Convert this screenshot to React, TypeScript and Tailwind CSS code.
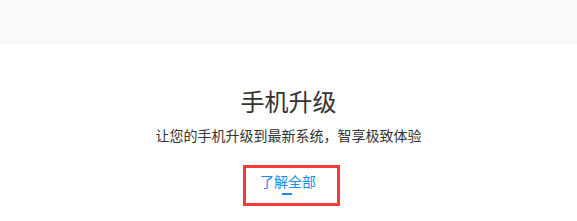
export default function App() {
  return (
    <div className="min-h-[221px] w-full bg-white font-['Noto_Sans_CJK_SC','Noto_Sans',sans-serif]">
      <div className="h-[44px] bg-[#fafafa]" />
      <section className="flex flex-col items-center pt-[41px] text-center">
        <h1 className="text-[24px] leading-[32px] font-normal text-[#333]">手机升级</h1>
        <p className="mt-[8px] text-[14px] leading-[20px] text-[#333]">让您的手机升级到最新系统，智享极致体验</p>
        <div className="mt-[20px] ml-[6px] flex h-[41px] w-[97px] flex-col border-[3px] border-[#f83a3a] pl-[14px]">
          <a className="mt-[3px] block w-[56px] text-[14px] leading-[20px] text-[#1a8ce6]" href="#">
            了解全部
          </a>
          <span className="mt-[2px] ml-[22px] block h-[2px] w-[10px] bg-[#1a8ce6]" />
        </div>
      </section>
    </div>
  );
}
